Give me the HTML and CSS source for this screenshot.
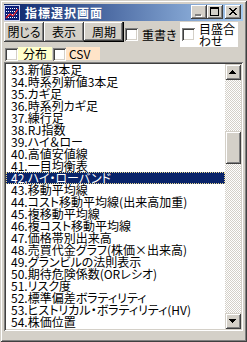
FILE: index.html
```html
<!DOCTYPE html>
<html lang="ja">
<head>
<meta charset="utf-8">
<title>指標選択画面</title>
<link rel="stylesheet" href="styles.css">
</head>
<body>
<div class="window">
  <div class="titlebar">
    <svg class="app-icon" viewBox="0 0 16 16" shape-rendering="crispEdges">
      <rect x="0" y="0" width="16" height="16" fill="#0c1f78"/>
      <rect x="0.5" y="0.5" width="15" height="15" fill="none" stroke="#c8d0f0"/>
      <path d="M2 3.5h12M2 6.5h12M2 9.5h12M2 12.5h12" stroke="#ffffff" stroke-dasharray="1 1"/>
      <polyline points="2,13 6,9 9,11 14,4" fill="none" stroke="#ff2020" stroke-width="1.2" shape-rendering="auto"/>
    </svg>
    <span class="title">指標選択画面</span>
    <div class="caption-buttons">
      <span class="cap-btn">
        <svg viewBox="0 0 16 14" shape-rendering="crispEdges"><path d="M5 10h6v2H5z" fill="#ffffff"/><path d="M4 9h6v2H4z" fill="#808080"/></svg>
      </span>
      <span class="cap-btn">
        <svg viewBox="0 0 16 14" shape-rendering="crispEdges"><path d="M3 2h9v2H3zM3 4h1v6H3zM11 4h1v6h-1zM3 10h9v1H3z" fill="#000"/></svg>
      </span>
      <span class="cap-btn close">
        <svg viewBox="0 0 16 14" shape-rendering="crispEdges"><path transform="translate(4 3)" d="M0 0h2v1H0zM6 0h2v1H6zM1 1h2v1H1zM5 1h2v1H5zM2 2h4v1H2zM3 3h2v1H3zM2 4h4v1H2zM1 5h2v1H1zM5 5h2v1H5zM0 6h2v1H0zM6 6h2v1H6z" fill="#000"/></svg>
      </span>
    </div>
  </div>

  <div class="toolbar">
    <button class="btn">閉じる</button>
    <button class="btn">表示</button>
    <button class="btn default">周期</button>
    <label class="check overwrite"><span class="box"></span><span class="check-text">重書き</span></label>
    <label class="check fit"><span class="box"></span><span class="check-text two-line">目盛合<br>わせ</span></label>
  </div>

  <div class="options">
    <label class="check opt"><span class="box"></span><span class="opt-label dist">分布</span></label>
    <label class="check opt"><span class="box"></span><span class="opt-label csv">CSV</span></label>
  </div>

  <div class="listbox">
    <ul class="items">
      <li>33.新値3本足</li>
      <li>34.時系列新値3本足</li>
      <li>35.カギ足</li>
      <li>36.時系列カギ足</li>
      <li>37.練行足</li>
      <li>38.RJ指数</li>
      <li>39.ハイ＆ロー</li>
      <li>40.高値安値線</li>
      <li>41.一目均衡表</li>
      <li class="selected">42.ハイ・ローバンド</li>
      <li>43.移動平均線</li>
      <li>44.コスト移動平均線(出来高加重)</li>
      <li>45.複移動平均線</li>
      <li>46.複コスト移動平均線</li>
      <li>47.価格帯別出来高</li>
      <li>48.売買代金グラフ(株価×出来高)</li>
      <li>49.グランビルの法則表示</li>
      <li>50.期待危険係数(ORレシオ)</li>
      <li>51.リスク度</li>
      <li>52.標準偏差ボラティリティ</li>
      <li>53.ヒストリカル・ボラティリティ(HV)</li>
      <li>54.株価位置</li>
    </ul>
    <div class="scrollbar">
      <span class="sb-btn"><svg viewBox="0 0 16 16" shape-rendering="crispEdges"><path d="M7 6h1v1H7zM6 7h3v1H6zM5 8h5v1H5zM4 9h7v1H4z" fill="#000"/></svg></span>
      <div class="track"><span class="thumb"></span></div>
      <span class="sb-btn"><svg viewBox="0 0 16 16" shape-rendering="crispEdges"><path d="M4 6h7v1H4zM5 7h5v1H5zM6 8h3v1H6zM7 9h1v1H7z" fill="#000"/></svg></span>
    </div>
  </div>
</div>
</body>
</html>
```

FILE: styles.css
```css
* {
  box-sizing: border-box;
  margin: 0;
  padding: 0;
}

html, body {
  width: 247px;
  height: 342px;
  overflow: hidden;
}

body {
  margin: 0;
  background: #d4d0c8;
  color: #000;
  font-family: "Noto Sans CJK JP", "Noto Sans", sans-serif;
  font-size: 12px;
  font-feature-settings: "palt";
}

.window {
  width: 247px;
  height: 342px;
  padding: 4px;
  background: #d4d0c8;
  display: flex;
  flex-direction: column;
  box-shadow:
    inset 1px 1px #d4d0c8,
    inset -1px -1px #404040,
    inset 2px 2px #ffffff,
    inset -2px -2px #808080;
}

/* title bar */
.titlebar {
  height: 17px;
  margin-bottom: 1px;
  display: flex;
  align-items: center;
  padding-right: 2px;
  background: linear-gradient(to right, #0a246a, #a6caf0);
}

.app-icon {
  width: 16px;
  height: 16px;
  flex: none;
  margin-right: 5px;
}

.title {
  flex: 1;
  color: #fff;
  font-weight: bold;
  font-size: 12px;
  letter-spacing: 1px;
  line-height: 17px;
  font-feature-settings: normal;
}

.caption-buttons {
  display: flex;
  align-self: flex-start;
  margin-top: 1px;
}

.cap-btn {
  width: 16px;
  height: 14px;
  display: block;
  background: #d4d0c8;
  box-shadow:
    inset -1px -1px #404040,
    inset 1px 1px #ffffff,
    inset -2px -2px #808080,
    inset 2px 2px #d4d0c8;
}

.cap-btn svg {
  display: block;
  width: 16px;
  height: 14px;
}

.cap-btn.close {
  margin-left: 2px;
}

/* toolbar row */
.toolbar {
  height: 25px;
  display: flex;
  align-items: flex-start;
}

.btn {
  width: 40px;
  height: 20px;
  border: none;
  background: #d4d0c8;
  font: inherit;
  font-size: 12px;
  line-height: 20px;
  color: #000;
  font-feature-settings: "palt";
  box-shadow:
    inset -1px -1px #404040,
    inset 1px 1px #ffffff,
    inset -2px -2px #808080,
    inset 2px 2px #d4d0c8;
}

.btn.default {
  box-shadow:
    inset -1px -1px #000000,
    inset -2px -2px #404040,
    inset 1px 1px #ffffff,
    inset -3px -3px #808080;
}

.check {
  display: flex;
  align-items: center;
}

.box {
  width: 13px;
  height: 13px;
  flex: none;
  background: #fff;
  box-shadow:
    inset 1px 1px #808080,
    inset -1px -1px #ffffff,
    inset 2px 2px #404040,
    inset -2px -2px #d4d0c8;
}

.check-text {
  margin-left: 4px;
  line-height: 12px;
  white-space: nowrap;
}

.overwrite {
  align-self: stretch;
  width: 55px;
  margin-left: 1px;
}

.fit {
  align-self: stretch;
  width: 58px;
  padding-left: 2px;
  background: #fff;
}

.two-line {
  align-self: flex-start;
  padding-top: 1px;
}

/* options row */
.options {
  height: 15px;
  display: flex;
  align-items: flex-start;
}

.opt {
  align-items: flex-start;
  margin-left: 1px;
}

.opt .box {
  margin-top: 1px;
}

.opt-label {
  width: 34px;
  height: 13px;
  line-height: 13px;
}

.dist {
  background: #ffffcc;
  padding-left: 5px;
}

.csv {
  background: #ffe4c8;
  padding-left: 3px;
}

/* list box */
.listbox {
  height: 269px;
  padding: 2px;
  display: flex;
  background: #fff;
  box-shadow:
    inset 1px 1px #808080,
    inset -1px -1px #ffffff,
    inset 2px 2px #404040,
    inset -2px -2px #d4d0c8;
}

.items {
  flex: 1;
  min-width: 0;
  list-style: none;
}

.items li {
  height: 12px;
  line-height: 12px;
  padding-left: 5px;
  white-space: nowrap;
}

.items li.selected {
  background: #0a246a;
  color: #fff;
  outline: 1px dotted #e8d890;
  outline-offset: -1px;
}

.scrollbar {
  width: 16px;
  display: flex;
  flex-direction: column;
}

.sb-btn {
  display: block;
  width: 16px;
  height: 16px;
  flex: none;
  background: #d4d0c8;
  box-shadow:
    inset 1px 1px #d4d0c8,
    inset -1px -1px #404040,
    inset 2px 2px #ffffff,
    inset -2px -2px #808080;
}

.sb-btn svg {
  display: block;
  width: 16px;
  height: 16px;
}

.track {
  flex: 1;
  padding-top: 51px;
  background-color: #fff;
  background-image: conic-gradient(#d4d0c8 25%, #fff 0 50%, #d4d0c8 0 75%, #fff 0);
  background-size: 2px 2px;
}

.thumb {
  display: block;
  height: 33px;
  background: #d4d0c8;
  box-shadow:
    inset 1px 1px #d4d0c8,
    inset -1px -1px #404040,
    inset 2px 2px #ffffff,
    inset -2px -2px #808080;
}
```
